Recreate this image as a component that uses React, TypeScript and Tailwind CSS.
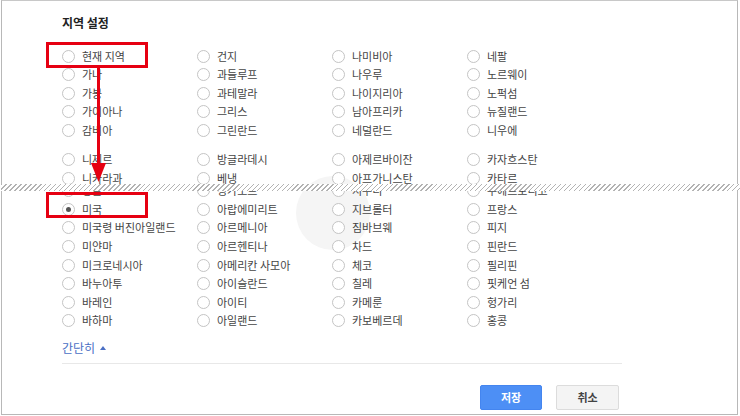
import React from 'react';

const top = [
    ['현재 지역', '건지', '나미비아', '네팔'],
    ['가나', '과들루프', '나우루', '노르웨이'],
    ['가봉', '과테말라', '나이지리아', '노퍽섬'],
    ['가이아나', '그리스', '남아프리카', '뉴질랜드'],
    ['감비아', '그린란드', '네덜란드', '니우에'],
];

const mid = [
    ['니제르', '방글라데시', '아제르바이잔', '카자흐스탄'],
    ['니카라과', '베냉', '아프가니스탄', '카타르'],
];

const low = [
    ['몽골', '싱가포르', '지부티', '푸에르토리코'],
    ['미국', '아랍에미리트', '지브롤터', '프랑스'],
    ['미국령 버진아일랜드', '아르메니아', '짐바브웨', '피지'],
    ['미얀마', '아르헨티나', '차드', '핀란드'],
    ['미크로네시아', '아메리칸 사모아', '체코', '필리핀'],
    ['바누아투', '아이슬란드', '칠레', '핏케언 섬'],
    ['바레인', '아이티', '카메룬', '헝가리'],
    ['바하마', '아일랜드', '카보베르데', '홍콩'],
];

function Radio({ checked }: { checked?: boolean }) {
    return (
        <span className="w-[13px] h-[13px] shrink-0 rounded-full border border-[#c4c4c4] bg-white flex items-center justify-center">
            {checked && <span className="w-[5px] h-[5px] rounded-full bg-[#555]" />}
        </span>
    );
}

function Rows({ rows, h }: { rows: string[][]; h: string }) {
    return (
        <div className="grid grid-cols-[135px_135px_135px_135px]">
            {rows.flatMap((row) =>
                row.map((name) => (
                    <div key={name} className={`flex items-center gap-[7px] ${h}`}>
                        <Radio checked={name === '미국'} />
                        <span className="text-[11px] text-[#444] whitespace-nowrap leading-none">{name}</span>
                    </div>
                ))
            )}
        </div>
    );
}

export default function App() {
    return (
        <div
            className="relative z-0 w-[740px] h-[416px] bg-white overflow-hidden"
            style={{ fontFamily: '"Noto Sans CJK KR", "Noto Sans", sans-serif' }}
        >
            {/* 희미한 워터마크 (본문 뒤) */}
            <div className="absolute -z-10 left-[296px] top-[176px] w-[74px] h-[74px] rounded-full bg-[#f5f5f5]" />

            <div className="ml-px w-[737px] h-[415px] border border-[#b8b8b8] border-t-[#c8c8c8] pl-[60px]">
                <div className="mt-[14px] h-[16px] leading-[16px] text-[12px] font-bold text-[#222]">지역 설정</div>

                <div className="mt-[16px]">
                    <Rows rows={top} h="h-[18.5px]" />
                </div>

                {/* 위쪽 캡처: 잘린 부분 */}
                <div className="mt-[10px] h-[34px] overflow-hidden">
                    <Rows rows={mid} h="h-[19px]" />
                </div>

                {/* 찢어진 경계선 */}
                <div className="-ml-[61px] w-[739px] h-[7px] bg-[repeating-linear-gradient(135deg,#b3b3b3_0px,#b3b3b3_1px,#ffffff_1px,#ffffff_3.5px)]" />

                <div className="h-[140px] overflow-hidden">
                    <div className="-mt-[9px]">
                        <Rows rows={low} h="h-[18.6px]" />
                    </div>
                </div>

                <div className="mt-[9px] h-[16px] flex items-center gap-[5px] text-[12px] text-[#4a6fc4]">
                    <span>간단히</span>
                    <span className="w-0 h-0 border-l-[3px] border-r-[3px] border-b-[4px] border-l-transparent border-r-transparent border-b-[#4a6fc4]" />
                </div>

                <div className="mt-[7px] w-[560px] h-px bg-[#e8e8e8]" />

                <div className="mt-[21px] w-[557px] flex justify-end gap-[14px]">
                    <button className="w-[62px] h-[25px] rounded-[2px] bg-[#4d8ff5] border border-[#4485ef] text-white text-[11px] font-bold">
                        저장
                    </button>
                    <button className="w-[63px] h-[25px] rounded-[2px] bg-[#f4f4f4] border border-[#dcdcdc] text-[#444] text-[11px] font-bold">
                        취소
                    </button>
                </div>
            </div>

            {/* 빨간 강조 표시 */}
            <div className="absolute left-[46px] top-[42px] w-[102px] h-[26px] border-[3px] border-[#e60012]" />
            <div className="absolute left-[46px] top-[192px] w-[102px] h-[26px] border-[3px] border-[#e60012]" />
            <svg className="absolute left-[88px] top-[66px]" width="22" height="118" viewBox="0 0 22 118">
                <rect x="9" y="0" width="3" height="100" fill="#e60012" />
                <polygon points="3,97 18,97 10.5,116" fill="#e60012" />
            </svg>
        </div>
    );
}
